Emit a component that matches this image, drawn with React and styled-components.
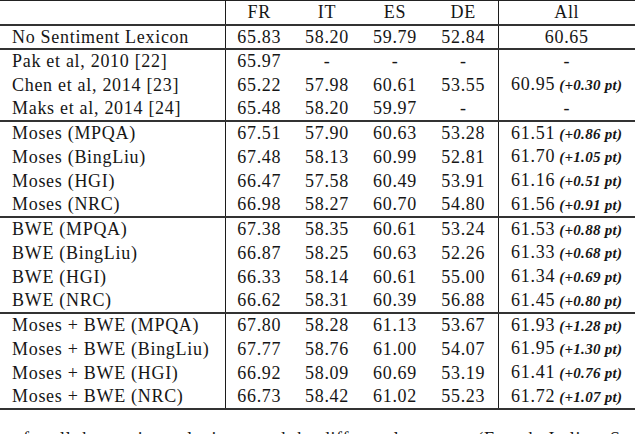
import React from 'react';
import styled, { createGlobalStyle } from 'styled-components';

const GlobalStyle = createGlobalStyle`
html, body {
  margin: 0;
  padding: 0;
  background: #fff;
}
`;

const Page = styled.div`
width: 640px;
height: 434px;
overflow: hidden;
background-color: #fff;
font-family: "Liberation Serif", "Times New Roman", serif;
color: #161616;
`;

const Table = styled.table`
width: 635px;
border-collapse: collapse;
table-layout: fixed;
font-family: "Liberation Serif", serif;
font-size: 18px;
letter-spacing: 0.7px;
color: #161616;
border-top: 1px solid #222;
border-bottom: 2px solid #333;
`;

const Head = styled.thead`
border-bottom: 2px solid #333;
`;

const Group = styled.tbody`
border-top: 2px solid #333;
`;

const Cell = styled.td`
box-sizing: border-box;
height: 24px;
padding: 0 0 0 ${(props) => (props.$left ? '12px' : '0')};
text-align: ${(props) => (props.$left ? 'left' : 'center')};
border-right: ${(props) => (props.$divider ? '1px solid #1c1c1c' : 'none')};
font-family: "Liberation Serif", serif;
font-size: 18px;
white-space: nowrap;
line-height: 22px;
vertical-align: middle;
`;

const Gain = styled.span`
font-size: 15px;
font-weight: bold;
font-style: italic;
letter-spacing: 0.3px;
`;

const Caption = styled.div`
margin-top: 17px;
padding-left: 23px;
font-family: "Liberation Serif", serif;
font-size: 18px;
letter-spacing: 0.7px;
line-height: 24px;
white-space: nowrap;
`;

const groups = [
  [
    ['No Sentiment Lexicon', '65.83', '58.20', '59.79', '52.84', '60.65', null],
  ],
  [
    ['Pak et al, 2010 [22]', '65.97', '-', '-', '-', '-', null],
    ['Chen et al, 2014 [23]', '65.22', '57.98', '60.61', '53.55', '60.95', '+0.30 pt'],
    ['Maks et al, 2014 [24]', '65.48', '58.20', '59.97', '-', '-', null],
  ],
  [
    ['Moses (MPQA)', '67.51', '57.90', '60.63', '53.28', '61.51', '+0.86 pt'],
    ['Moses (BingLiu)', '67.48', '58.13', '60.99', '52.81', '61.70', '+1.05 pt'],
    ['Moses (HGI)', '66.47', '57.58', '60.49', '53.91', '61.16', '+0.51 pt'],
    ['Moses (NRC)', '66.98', '58.27', '60.70', '54.80', '61.56', '+0.91 pt'],
  ],
  [
    ['BWE (MPQA)', '67.38', '58.35', '60.61', '53.24', '61.53', '+0.88 pt'],
    ['BWE (BingLiu)', '66.87', '58.25', '60.63', '52.26', '61.33', '+0.68 pt'],
    ['BWE (HGI)', '66.33', '58.14', '60.61', '55.00', '61.34', '+0.69 pt'],
    ['BWE (NRC)', '66.62', '58.31', '60.39', '56.88', '61.45', '+0.80 pt'],
  ],
  [
    ['Moses + BWE (MPQA)', '67.80', '58.28', '61.13', '53.67', '61.93', '+1.28 pt'],
    ['Moses + BWE (BingLiu)', '67.77', '58.76', '61.00', '54.07', '61.95', '+1.30 pt'],
    ['Moses + BWE (HGI)', '66.92', '58.09', '60.69', '53.19', '61.41', '+0.76 pt'],
    ['Moses + BWE (NRC)', '66.73', '58.42', '61.02', '55.23', '61.72', '+1.07 pt'],
  ],
];

function Row({ row }) {
  const [name, fr, it, es, de, all, gain] = row;
  return (
    <tr>
      <Cell $left $divider>{name}</Cell>
      <Cell>{fr}</Cell>
      <Cell>{it}</Cell>
      <Cell>{es}</Cell>
      <Cell $divider>{de}</Cell>
      <Cell>
        {all}
        {gain ? <Gain> ({gain})</Gain> : null}
      </Cell>
    </tr>
  );
}

function App() {
  return (
    <Page>
      <GlobalStyle />
      <Table>
        <colgroup>
          <col style={{ width: '225px' }} />
          <col style={{ width: '68px' }} />
          <col style={{ width: '68px' }} />
          <col style={{ width: '68px' }} />
          <col style={{ width: '69px' }} />
          <col style={{ width: '137px' }} />
        </colgroup>
        <Head>
          <tr>
            <Cell $left $divider />
            <Cell>FR</Cell>
            <Cell>IT</Cell>
            <Cell>ES</Cell>
            <Cell $divider>DE</Cell>
            <Cell>All</Cell>
          </tr>
        </Head>
        {groups.map((rows, i) => (
          <Group key={i}>
            {rows.map((row) => <Row key={row[0]} row={row} />)}
          </Group>
        ))}
      </Table>
      <Caption>
        for all the sentiment lexicons and the different languages (French, Italian, Spanish and German)
      </Caption>
    </Page>
  );
}

export default App;
